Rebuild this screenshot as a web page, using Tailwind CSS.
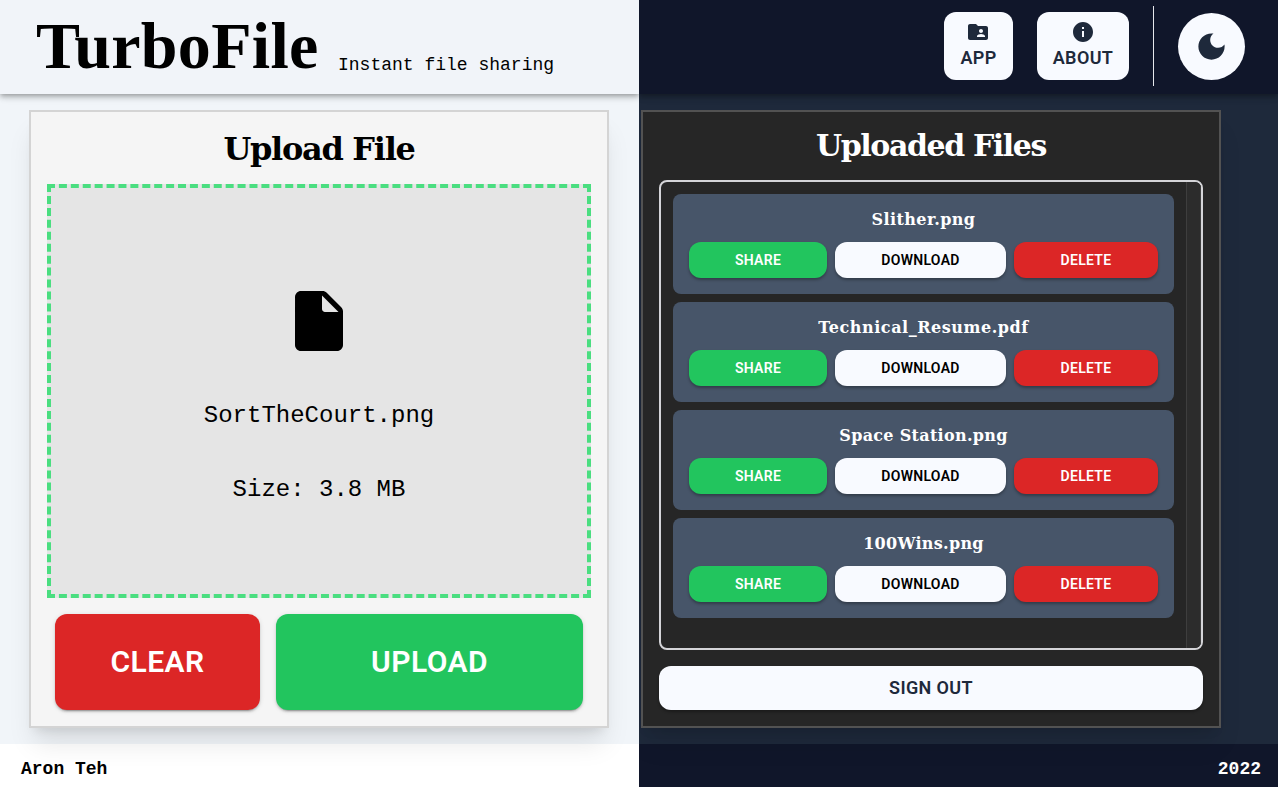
<!DOCTYPE html>
<html lang="en">
<head>
<meta charset="utf-8">
<title>TurboFile</title>
<script src="https://cdn.jsdelivr.net/npm/@tailwindcss/browser@4"></script>
</head>
<body class="flex h-[787px] w-[1278px] overflow-hidden">
<section class="flex w-[639px] flex-col overflow-hidden bg-[#f1f5f9] text-black">
  <header class="relative z-10 flex h-[94px] shrink-0 items-start bg-[#f1f4f9] pl-9 shadow-[0_2px_4px_-1px_rgba(0,0,0,.2),0_4px_5px_0_rgba(0,0,0,.14),0_1px_10px_0_rgba(0,0,0,.12)]">
    <h1 class="w-[302px] pt-2.5 font-['Liberation_Serif'] text-[66px] leading-[72px] font-bold tracking-[.3px] whitespace-nowrap">TurboFile</h1>
    <p class="pt-[51px] font-['Liberation_Mono'] text-lg whitespace-nowrap">Instant file sharing</p>
  </header>
  <main class="relative px-[29px] pt-4 pb-4">
    <div class="flex h-[618px] w-[580px] flex-col border-2 border-[#d4d4d4] bg-[#f5f5f5] px-4 shadow-[0_20px_25px_-5px_rgba(0,0,0,.1),0_8px_10px_-6px_rgba(0,0,0,.1)]">
      <h2 class="h-[72px] pt-[17px] text-center font-['DejaVu_Serif'] text-[32px] leading-10 font-bold tracking-[-1.3px]">Upload File</h2>
      <div class="flex h-[414px] flex-col items-center border-4 border-dashed border-[#4ade80] bg-[#e5e5e5] pt-[97px] font-['Liberation_Mono'] text-2xl">
        <svg class="size-[72px]" viewBox="0 0 24 24"><path d="M6 2c-1.1 0-1.99.9-1.99 2L4 20c0 1.1.89 2 1.99 2H18c1.1 0 2-.9 2-2V8.83c0-.53-.21-1.04-.59-1.41l-4.83-4.83c-.37-.38-.88-.59-1.41-.59H6zm7 6V3.5L18.5 9H14c-.55 0-1-.45-1-1z"/></svg>
        <p class="mt-[43px]">SortTheCourt.png</p>
        <p class="mt-[42px]">Size: 3.8 MB</p>
      </div>
      <div class="mt-4 flex h-24 gap-4 px-2 font-['Roboto'] text-3xl font-semibold tracking-[.015em] text-white">
        <button class="w-[205px] rounded-xl bg-[#dc2626] shadow-[0_3px_1px_-2px_rgba(0,0,0,.2),0_2px_2px_0_rgba(0,0,0,.14),0_1px_5px_0_rgba(0,0,0,.12)]">CLEAR</button>
        <button class="w-[307px] rounded-xl bg-[#22c55e] shadow-[0_3px_1px_-2px_rgba(0,0,0,.2),0_2px_2px_0_rgba(0,0,0,.14),0_1px_5px_0_rgba(0,0,0,.12)]">UPLOAD</button>
      </div>
    </div>
  </main>
  <footer class="h-[43px] bg-white pt-[11px] pl-[21px] font-['Liberation_Mono'] text-lg leading-7 font-bold">Aron Teh</footer>
</section>

<section class="flex w-[639px] flex-col overflow-hidden bg-[#1e293b] text-white">
  <header class="relative z-10 flex h-[94px] shrink-0 items-center justify-end bg-[#10162a] pr-[33px] pb-0.5 font-['Roboto'] text-lg font-semibold tracking-[.02em] text-[#1e293b] shadow-[0_2px_4px_-1px_rgba(0,0,0,.2),0_4px_5px_0_rgba(0,0,0,.14),0_1px_10px_0_rgba(0,0,0,.12)]">
    <button class="mr-6 flex h-[68px] w-[69px] flex-col items-center rounded-xl bg-[#f8faff] pt-2">
      <svg class="size-6 -translate-x-px fill-current" viewBox="0 0 24 24"><path d="M20 6h-8l-2-2H4c-1.1 0-1.99.9-1.99 2L2 18c0 1.1.9 2 2 2h16c1.1 0 2-.9 2-2V8c0-1.1-.9-2-2-2zm-5 3c1.1 0 2 .9 2 2s-.9 2-2 2-2-.9-2-2 .9-2 2-2zm4 8h-8v-1c0-1.33 2.67-2 4-2s4 .67 4 2v1z"/></svg>
      <span>APP</span>
    </button>
    <button class="mr-6 flex h-[68px] w-[92px] flex-col items-center rounded-xl bg-[#f8faff] pt-2">
      <svg class="size-6 fill-current" viewBox="0 0 24 24"><path d="M12 2C6.48 2 2 6.48 2 12s4.48 10 10 10 10-4.48 10-10S17.52 2 12 2zm1 15h-2v-6h2v6zm0-8h-2V7h2v2z"/></svg>
      <span>ABOUT</span>
    </button>
    <div class="mr-6 h-20 w-px bg-[#e5e7eb]"></div>
    <button class="mt-px flex size-[67px] items-center justify-center rounded-full bg-[#f8faff]">
      <svg class="size-[35px] fill-current" viewBox="0 0 24 24"><path d="M12 3c-4.97 0-9 4.03-9 9s4.03 9 9 9 9-4.03 9-9c0-.46-.04-.92-.1-1.36-.98 1.37-2.58 2.26-4.4 2.26-2.98 0-5.4-2.42-5.4-5.4 0-1.81.89-3.42 2.26-4.4-.44-.06-.9-.1-1.36-.1z"/></svg>
    </button>
  </header>
  <main class="relative pt-4 pb-4 pl-0.5">
    <div class="flex h-[618px] w-[580px] flex-col border-2 border-[#525252] bg-[#262626] px-4 shadow-[0_20px_25px_-5px_rgba(0,0,0,.1),0_8px_10px_-6px_rgba(0,0,0,.1)]">
      <h2 class="h-[68px] pt-[14px] text-center font-['DejaVu_Serif'] text-[30px] leading-10 font-bold tracking-[-1.4px]">Uploaded Files</h2>
      <div class="flex h-[470px] overflow-hidden rounded-lg border-2 border-[#d4d4d8]">
        <ul class="flex flex-1 flex-col gap-2 p-3 font-['Roboto'] text-sm font-semibold tracking-[.02em]">
          <li class="h-[100px] rounded-lg bg-[#475569] px-4">
            <h3 class="h-12 pt-[13px] text-center font-['DejaVu_Serif'] text-base leading-[26px] font-bold tracking-[.4px]">Slither.png</h3>
            <div class="flex h-9 gap-2"><button class="w-[138px] rounded-xl bg-[#22c55e] shadow-[0_2px_3px_rgba(0,0,0,.3)]">SHARE</button><button class="w-[171px] rounded-xl bg-[#f8faff] text-black shadow-[0_2px_3px_rgba(0,0,0,.3)]">DOWNLOAD</button><button class="w-36 rounded-xl bg-[#dc2626] shadow-[0_2px_3px_rgba(0,0,0,.3)]">DELETE</button></div>
          </li>
          <li class="h-[100px] rounded-lg bg-[#475569] px-4">
            <h3 class="h-12 pt-[13px] text-center font-['DejaVu_Serif'] text-base leading-[26px] font-bold tracking-[.55px]">Technical_Resume.pdf</h3>
            <div class="flex h-9 gap-2"><button class="w-[138px] rounded-xl bg-[#22c55e] shadow-[0_2px_3px_rgba(0,0,0,.3)]">SHARE</button><button class="w-[171px] rounded-xl bg-[#f8faff] text-black shadow-[0_2px_3px_rgba(0,0,0,.3)]">DOWNLOAD</button><button class="w-36 rounded-xl bg-[#dc2626] shadow-[0_2px_3px_rgba(0,0,0,.3)]">DELETE</button></div>
          </li>
          <li class="h-[100px] rounded-lg bg-[#475569] px-4">
            <h3 class="h-12 pt-[13px] text-center font-['DejaVu_Serif'] text-base leading-[26px] font-bold tracking-[.3px]">Space Station.png</h3>
            <div class="flex h-9 gap-2"><button class="w-[138px] rounded-xl bg-[#22c55e] shadow-[0_2px_3px_rgba(0,0,0,.3)]">SHARE</button><button class="w-[171px] rounded-xl bg-[#f8faff] text-black shadow-[0_2px_3px_rgba(0,0,0,.3)]">DOWNLOAD</button><button class="w-36 rounded-xl bg-[#dc2626] shadow-[0_2px_3px_rgba(0,0,0,.3)]">DELETE</button></div>
          </li>
          <li class="h-[100px] rounded-lg bg-[#475569] px-4">
            <h3 class="h-12 pt-[13px] text-center font-['DejaVu_Serif'] text-base leading-[26px] font-bold tracking-[.3px]">100Wins.png</h3>
            <div class="flex h-9 gap-2"><button class="w-[138px] rounded-xl bg-[#22c55e] shadow-[0_2px_3px_rgba(0,0,0,.3)]">SHARE</button><button class="w-[171px] rounded-xl bg-[#f8faff] text-black shadow-[0_2px_3px_rgba(0,0,0,.3)]">DOWNLOAD</button><button class="w-36 rounded-xl bg-[#dc2626] shadow-[0_2px_3px_rgba(0,0,0,.3)]">DELETE</button></div>
          </li>
        </ul>
        <div class="w-[15px] border-x border-[#3e3e3e] bg-[#2c2c2c]"></div>
      </div>
      <button class="mt-4 h-11 shrink-0 rounded-xl bg-[#f8faff] font-['Roboto'] text-lg font-semibold tracking-[.02em] text-[#1e293b] shadow-[0_2px_3px_rgba(0,0,0,.3)]">SIGN OUT</button>
    </div>
  </main>
  <footer class="h-[43px] bg-[#10162a] pt-[11px] pr-[17px] text-right font-['Liberation_Mono'] text-lg leading-7 font-bold">2022</footer>
</section>
</body>
</html>
